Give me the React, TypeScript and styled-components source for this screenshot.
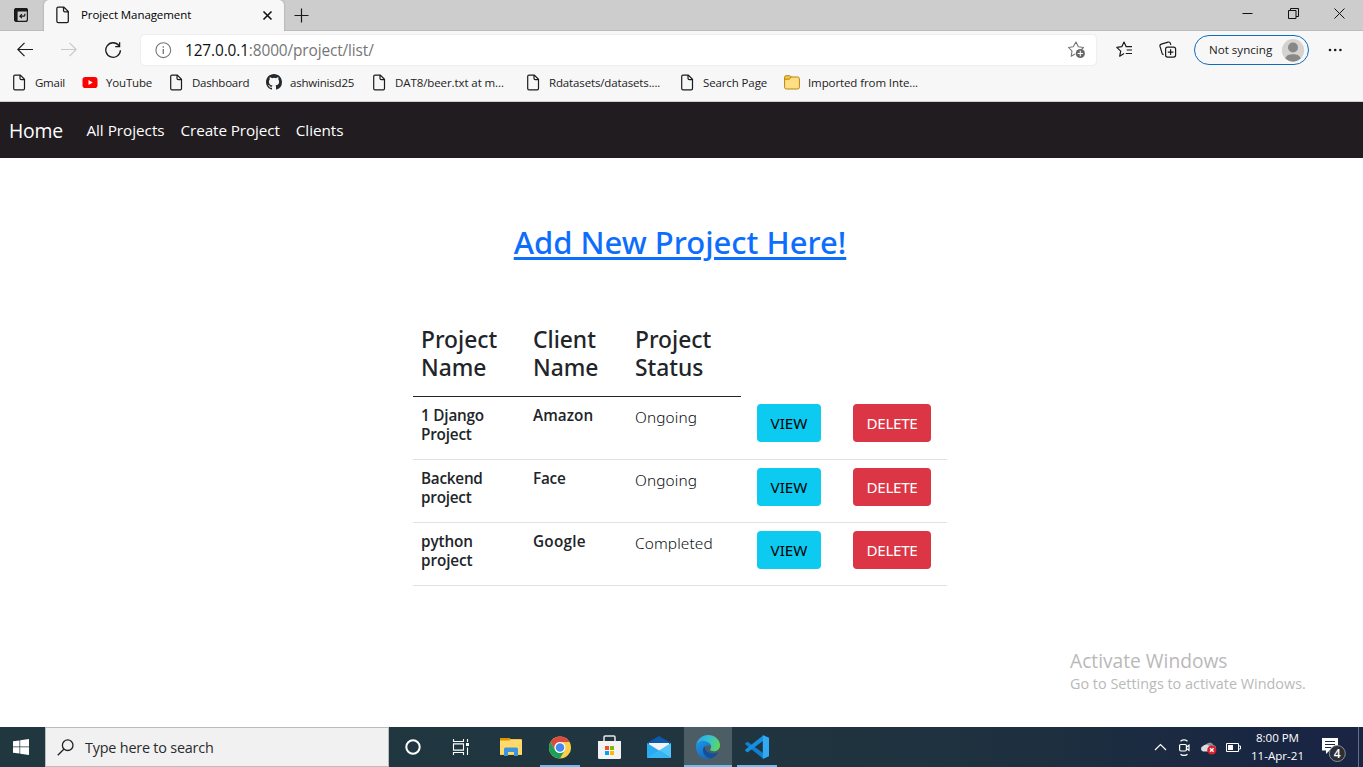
import React from 'react';
import styled, { createGlobalStyle } from 'styled-components';

const GlobalStyle = createGlobalStyle`
  * { box-sizing: border-box; }
  body { margin: 0; background: #fff; font-family: "Open Sans", "Noto Sans", sans-serif; overflow: hidden; }
  h1, h4, h6, p { margin: 0; }
  svg { display: block; flex: none; }
`;

const Screen = styled.div`
  width: 1363px;
  height: 767px;
  display: flex;
  flex-direction: column;
  overflow: hidden;
`;

const Label = styled.span<{ $size: number; $spacing?: number; $weight?: number }>`
  font-size: ${(p) => p.$size}px;
  font-weight: ${(p) => p.$weight ?? 400};
  letter-spacing: ${(p) => p.$spacing ?? 0}px;
  white-space: nowrap;
`;

/* Browser tab strip */
const TabStrip = styled.div`
  height: 31px;
  flex: none;
  display: flex;
  background: #cdcdcd;
  box-shadow: inset 0 -1px #bdbdbd;
`;

const TabActions = styled.div`
  width: 44px;
  height: 30px;
  display: flex;
  align-items: center;
  padding-left: 13px;
`;

const Tab = styled.div`
  width: 240px;
  height: 31px;
  display: flex;
  align-items: center;
  padding: 0 11px 1px 10px;
  background: #f7f7f7;
  border-radius: 5px 5px 0 0;
  box-shadow: 0 0 2px rgba(0, 0, 0, 0.3);
`;

const TabTitle = styled.div`
  flex: 1;
  padding: 0 0 2px 9px;
  line-height: 20px;
`;

const NewTab = styled.div`
  flex: 1;
  height: 30px;
  display: flex;
  align-items: center;
  padding-left: 10px;
`;

const WindowControls = styled.div`
  display: flex;
  height: 27px;
  align-items: center;
`;

const WindowButton = styled.div`
  width: 46px;
  display: flex;
  justify-content: center;
`;

/* Address row */
const Toolbar = styled.div`
  height: 38px;
  flex: none;
  display: flex;
  align-items: center;
  background: #f7f7f7;
`;

const NavButtons = styled.div`
  width: 141px;
  display: flex;
  gap: 28px;
  padding-left: 17px;
`;

const AddressBar = styled.div`
  width: 955px;
  height: 30px;
  display: flex;
  align-items: center;
  padding: 0 10px 0 14px;
  background: #fff;
  border-radius: 4px;
  box-shadow: 0 0 2px rgba(0, 0, 0, 0.12);
`;

const Url = styled.div`
  flex: 1;
  padding-left: 13px;
  color: #767676;
  line-height: 24px;
  b { color: #111; font-weight: 400; }
`;

const ToolbarIcons = styled.div`
  width: 98px;
  display: flex;
  gap: 26px;
  padding-left: 20px;
`;

const Profile = styled.div`
  width: 115px;
  height: 30px;
  display: flex;
  align-items: center;
  justify-content: space-between;
  padding: 0 3px 0 14px;
  border: 1px solid #0f6cbd;
  border-radius: 15px;
  color: #1b1b1b;
  span { padding-bottom: 2px; }
`;

const More = styled.div`
  padding-left: 18px;
`;

const Bookmarks = styled.div`
  height: 33px;
  flex: none;
  display: flex;
  padding: 1px 0 6px 11px;
  background: #f7f7f7;
  border-bottom: 1px solid #cfd0d2;
  color: #222;
`;

const Bookmark = styled.div<{ $width: number }>`
  width: ${(p) => p.$width}px;
  display: flex;
  align-items: center;
  gap: 7px;
`;

/* Site */
const SiteNav = styled.nav`
  height: 56px;
  flex: none;
  display: flex;
  align-items: center;
  padding: 0 0 0 9px;
  background: #211c20;
  color: #fff;
`;

const Brand = styled.div`
  width: 77.4px;
  padding-top: 2px;
  line-height: 30px;
`;

const NavLinks = styled.div`
  display: flex;
  gap: 16px;
  line-height: 24px;
`;

const Page = styled.main`
  flex: 1;
  display: flex;
  flex-direction: column;
  background: #fff;
  color: #212529;
`;

const AddLink = styled.h1`
  width: 534px;
  margin: 65px 0 0 413px;
  text-align: center;
  font-family: "Noto Sans", "Open Sans", sans-serif;
  font-size: 31px;
  line-height: 38px;
  font-weight: 500;
  color: #0d6efd;
  text-decoration: underline;
  text-decoration-thickness: 3px;
  text-underline-offset: 3px;
`;

const Table = styled.div`
  width: 534px;
  margin: 56px 0 0 413px;
`;

const TableHead = styled.div`
  width: 328px;
  height: 80px;
  display: grid;
  grid-template-columns: 112px 102px 114px;
  padding-top: 9px;
  border-bottom: 1px solid #212529;
`;

const HeadCell = styled.h4`
  padding: 0 8px;
  font-family: "Noto Sans", "Open Sans", sans-serif;
  font-size: 22.8px;
  line-height: 28px;
  font-weight: 500;
`;

const TableRow = styled.div`
  height: 63px;
  display: grid;
  grid-template-columns: 112px 102px 114px 96px 110px;
  border-bottom: 1px solid #dee2e6;
`;

const NameCell = styled.h6`
  padding: 9px 8px 0;
  font-size: 15px;
  line-height: 19px;
  font-weight: 600;
`;

const StatusCell = styled.p`
  padding: 9px 8px 0;
  font-family: "Noto Sans", "Open Sans", sans-serif;
  font-size: 15.4px;
  line-height: 24px;
  font-weight: 300;
  letter-spacing: 0.12px;
  color: #0c0f12;
`;

const ActionCell = styled.div<{ $drop: boolean }>`
  padding: ${(p) => (p.$drop ? 8 : 7)}px 16px 0;
`;

const ActionButton = styled.button<{ $kind: 'view' | 'delete' }>`
  width: ${(p) => (p.$kind === 'view' ? 64 : 78)}px;
  height: 38px;
  padding: 0 0 1px;
  border: 0;
  border-radius: 4px;
  background: ${(p) => (p.$kind === 'view' ? '#0dcaf0' : '#dc3545')};
  color: ${(p) => (p.$kind === 'view' ? '#000' : '#fff')};
  font: 400 15.2px "Noto Sans", "Open Sans", sans-serif;
  letter-spacing: ${(p) => (p.$kind === 'view' ? 0.05 : -0.3)}px;
`;

const Watermark = styled.div`
  margin: 61px 0 0 1070px;
  display: flex;
  flex-direction: column;
  color: #b9b9b9;
  line-height: 27px;
  span + span { line-height: 20px; }
`;

/* Taskbar */
const Taskbar = styled.footer`
  height: 40px;
  flex: none;
  display: flex;
  background: linear-gradient(90deg, #203740 0%, #20353f 55%, #1e303f 75%, #192642 93%, #192543 100%);
  color: #fff;
`;

const Start = styled.div`
  width: 45px;
  display: flex;
  align-items: center;
  padding-left: 13px;
`;

const Search = styled.div`
  width: 344px;
  display: flex;
  align-items: center;
  gap: 11px;
  padding-left: 11px;
  background: #f1f1f1;
  border: 1px solid #bcbcbc;
  color: #2b2b2b;
`;

const Apps = styled.div`
  flex: 1;
  display: flex;
`;

const TaskbarApp = styled.div<{ $active?: boolean; $open?: boolean }>`
  width: 48px;
  margin-right: 1.17px;
  display: flex;
  align-items: center;
  justify-content: center;
  background: ${(p) => {
    if (p.$active) return '#4d5d66';
    return p.$open ? 'linear-gradient(#76b9ed, #76b9ed) center bottom / 40px 2px no-repeat' : 'transparent';
  }};
  box-shadow: ${(p) => (p.$active ? 'inset 0 -2px #76b9ed' : 'none')};
`;

const Tray = styled.div`
  display: flex;
  align-items: center;
`;

const TrayIcons = styled.div`
  display: flex;
  align-items: center;
  gap: 9px;
`;

const Clock = styled.div`
  width: 73px;
  display: flex;
  flex-direction: column;
  align-items: center;
  line-height: 18px;
  padding-bottom: 1px;
`;

const Notifications = styled.div`
  width: 44px;
  padding: 5px 0 0 8px;
`;

const ShowDesktop = styled.div`
  width: 5px;
  height: 40px;
  border-left: 1px solid #67708a;
`;

const FileIcon = ({ size = 17 }: { size?: number }) => (
  <svg width={size} height={size} viewBox="0 0 17 17" fill="none" stroke="#1c1c1c" strokeWidth="1.2">
    <path d="M4.1 1.1h5.2l4.2 4.2v9.2a1.3 1.3 0 0 1-1.3 1.3H4a1.3 1.3 0 0 1-1.3-1.3V2.4a1.3 1.3 0 0 1 1.4-1.3zM9 1.2v3.1a1.3 1.3 0 0 0 1.3 1.3h3.1" />
  </svg>
);

const YoutubeIcon = () => (
  <svg width="17" height="17" viewBox="0 0 17 17">
    <rect x="0.5" y="3" width="15" height="11" rx="2.8" fill="#f00" />
    <path d="M6.500 6v5l4.200-2.500z" fill="#fff" />
  </svg>
);

const GithubIcon = () => (
  <svg width="17" height="17" viewBox="0 0 17 17" fill="#24292e">
    <path d="M8 0C3.58 0 0 3.58 0 8c0 3.54 2.29 6.53 5.47 7.59.4.07.55-.17.55-.38 0-.19-.01-.82-.01-1.49-2.01.37-2.53-.49-2.69-.94-.09-.23-.48-.94-.82-1.13-.28-.15-.68-.52-.01-.53.63-.01 1.08.58 1.23.82.72 1.21 1.87.87 2.33.66.07-.52.28-.87.51-1.07-1.78-.2-3.64-.89-3.64-3.95 0-.87.31-1.59.82-2.15-.08-.2-.36-1.02.08-2.12 0 0 .67-.21 2.2.82a7.4 7.4 0 0 1 4 0c1.53-1.04 2.2-.82 2.2-.82.44 1.1.16 1.92.08 2.12.51.56.82 1.27.82 2.15 0 3.07-1.87 3.75-3.65 3.95.29.25.54.73.54 1.48 0 1.07-.01 1.93-.01 2.2 0 .21.15.46.55.38A8 8 0 0 0 16 8c0-4.42-3.58-8-8-8z" />
  </svg>
);

const FolderIcon = () => (
  <svg width="17" height="17" viewBox="0 0 17 17" stroke="#b8860b" strokeWidth="1">
    <rect x="0.600" y="3" width="14.800" height="12" rx="1.800" fill="#ffdf85" />
    <path d="M.6 5.200V3.300a1.600 1.600 0 0 1 1.600-1.600h3.300a1.400 1.400 0 0 1 1.200.7L7 3 5.800 4.800a1 1 0 0 1-.8.4z" fill="#f5c542" />
  </svg>
);

const bookmarks = [
  { text: 'Gmail', width: 71, spacing: -0.25, icon: <FileIcon /> },
  { text: 'YouTube', width: 86, spacing: -0.17, icon: <YoutubeIcon /> },
  { text: 'Dashboard', width: 98, spacing: -0.23, icon: <FileIcon /> },
  { text: 'ashwinisd25', width: 105, spacing: -0.2, icon: <GithubIcon /> },
  { text: 'DAT8/beer.txt at m...', width: 154, spacing: -0.09, icon: <FileIcon /> },
  { text: 'Rdatasets/datasets....', width: 154, spacing: -0.14, icon: <FileIcon /> },
  { text: 'Search Page', width: 105, spacing: -0.12, icon: <FileIcon /> },
  { text: 'Imported from Inte...', width: 150, spacing: -0.1, icon: <FolderIcon /> },
];

const projects = [
  { name: ['1 Django', 'Project'], spacing: -0.2, client: 'Amazon', clientSpacing: 0.05, status: 'Ongoing' },
  { name: ['Backend', 'project'], spacing: -0.25, client: 'Face', clientSpacing: -0.2, status: 'Ongoing' },
  { name: ['python', 'project'], spacing: -0.1, client: 'Google', clientSpacing: 0.25, status: 'Completed' },
];

const BrowserTabs = () => (
  <TabStrip>
    <TabActions>
      <svg width="16" height="16" viewBox="0 0 16 16" fill="none" stroke="#1a1a1a" strokeWidth="1.2">
        <rect x="1.6" y="1.6" width="12.8" height="12.8" rx="2" />
        <path d="M1.6 4v-.8a1.6 1.6 0 0 1 1.6-1.6h9.6a1.6 1.6 0 0 1 1.6 1.6V4z" fill="#1a1a1a" />
        <path d="M2 4h2v10.2H3a1 1 0 0 1-1-1z" fill="#1a1a1a" />
        <path d="M11.8 6.8v1.4a1 1 0 0 1-1 1H7M8.9 7.2l-2 2 2 2" />
      </svg>
    </TabActions>
    <Tab>
      <FileIcon size={18} />
      <TabTitle>
        <Label $size={11.5} $spacing={-0.08}>Project Management</Label>
      </TabTitle>
      <svg width="11" height="11" viewBox="0 0 11 11" stroke="#111" strokeWidth="1.6">
        <path d="M1.5 1.5l8 8M9.5 1.5l-8 8" />
      </svg>
    </Tab>
    <NewTab>
      <svg width="15" height="15" viewBox="0 0 15 15" stroke="#1a1a1a" strokeWidth="1.2">
        <path d="M7.5 0.5v14M0.5 7.5h14" />
      </svg>
    </NewTab>
    <WindowControls>
      <WindowButton>
        <svg width="12" height="11" viewBox="0 0 12 11" stroke="#111"><path d="M0.5 5.5h10" /></svg>
      </WindowButton>
      <WindowButton>
        <svg width="12" height="11" viewBox="0 0 12 11" fill="none" stroke="#111">
          <path d="M.5 2.5h7.5v8h-7.5zM2.5 2.5v-2h8v8h-2.5" />
        </svg>
      </WindowButton>
      <WindowButton>
        <svg width="12" height="11" viewBox="0 0 12 11" stroke="#111"><path d="M.5.5l10 10M10.5.5l-10 10" /></svg>
      </WindowButton>
    </WindowControls>
  </TabStrip>
);

const AddressRow = () => (
  <Toolbar>
    <NavButtons>
      <svg width="16" height="16" viewBox="0 0 16 16" fill="none" stroke="#1a1a1a" strokeWidth="1.2">
        <path d="M16 7.5H1M7.5.8L.8 7.5l6.7 6.7" />
      </svg>
      <svg width="16" height="16" viewBox="0 0 16 16" fill="none" stroke="#c9c9c9" strokeWidth="1.2">
        <path d="M0 7.5h15M8.5.8l6.7 6.7-6.7 6.7" />
      </svg>
      <svg width="17" height="17" viewBox="0 0 17 17" fill="none" stroke="#1a1a1a" strokeWidth="1.3">
        <path d="M13.9 3.6A7.3 7.3 0 1 0 15.4 8.2M14.6 0.3v4.3h-4.4" />
      </svg>
    </NavButtons>
    <AddressBar>
      <svg width="17" height="17" viewBox="0 0 17 17" fill="none" stroke="#767676" strokeWidth="1.1">
        <circle cx="8.3" cy="8.2" r="7.4" />
        <path d="M8.3 7v5M8.3 4.2v1.5" strokeWidth="1.3" />
      </svg>
      <Url>
        <Label $size={15.4} $spacing={-0.12}><b>127.0.0.1</b>:8000/project/list/</Label>
      </Url>
      <svg width="18" height="18" viewBox="0 0 18 18" fill="none" stroke="#767676" strokeWidth="1.1">
        <path d="M7 13L3.200 15.200l.8-5L.6 6.500l4.600-.8L8 1l2.300 4.700 5.200.8-2 2" strokeLinejoin="round" />
        <circle cx="12.300" cy="12.500" r="4.600" fill="#676767" stroke="none" />
        <path d="M12.300 9.800v5.400M9.600 12.500h5.400" stroke="#fff" />
      </svg>
    </AddressBar>
    <ToolbarIcons>
      <svg width="17" height="17" viewBox="0 0 17 17" fill="none" stroke="#1a1a1a" strokeWidth="1.2" strokeLinejoin="round">
        <path d="M8 12.600L3.700 15.200l1-5.100L.8 6.400l5-.7L8 1.100l2.200 4.600H16M10.700 9H16M9.700 12.500H16" />
      </svg>
      <svg width="18" height="18" viewBox="0 0 18 18" fill="none" stroke="#1a1a1a" strokeWidth="1.2">
        <rect x="6.600" y="6.100" width="10" height="10" rx="2" />
        <path d="M11.600 8.300v5.600M8.800 11.100h5.600M4.600 13.600a2 2 0 0 1-1.500-1.200L1 5.400a1.900 1.900 0 0 1 1.300-2.300l6.800-2a1.900 1.900 0 0 1 2.300 1.300l.4 1.400" />
      </svg>
    </ToolbarIcons>
    <Profile>
      <Label $size={11.6}>Not syncing</Label>
      <svg width="23" height="23" viewBox="0 0 23 23">
        <circle cx="11" cy="11.300" r="11.200" fill="#d5d3d1" />
        <circle cx="11" cy="8.500" r="5" fill="#8a8886" />
        <path d="M3.300 19.600c1-3.500 4-4.300 7.700-4.300s6.700.8 7.700 4.300a11.300 11.300 0 0 1-15.400 0z" fill="#8a8886" />
      </svg>
    </Profile>
    <More>
      <svg width="16" height="4" viewBox="0 0 16 4" fill="#1a1a1a">
        <circle cx="3" cy="2" r="1.300" /><circle cx="8.200" cy="2" r="1.300" /><circle cx="13.400" cy="2" r="1.300" />
      </svg>
    </More>
  </Toolbar>
);

const ProjectTable = () => (
  <Table>
    <TableHead>
      <HeadCell>Project Name</HeadCell>
      <HeadCell>Client Name</HeadCell>
      <HeadCell>Project Status</HeadCell>
    </TableHead>
    {projects.map((p, i) => (
      <TableRow key={p.client}>
        <NameCell><Label $size={15.3} $weight={600} $spacing={p.spacing}>{p.name[0]}<br />{p.name[1]}</Label></NameCell>
        <NameCell><Label $size={15.3} $weight={600} $spacing={p.clientSpacing}>{p.client}</Label></NameCell>
        <StatusCell>{p.status}</StatusCell>
        <ActionCell $drop={i > 0}><ActionButton $kind="view">VIEW</ActionButton></ActionCell>
        <ActionCell $drop={i > 0}><ActionButton $kind="delete">DELETE</ActionButton></ActionCell>
      </TableRow>
    ))}
  </Table>
);

const WindowsTaskbar = () => (
  <Taskbar>
    <Start>
      <svg width="16" height="16" viewBox="0 0 16 16" fill="#fff">
        <path d="M0 2.300L6.500 1.400v6.200H0zM7.200 1.300L16 0v7.600H7.200zM0 8.300h6.500v6.300L0 13.700zM7.200 8.300H16V16l-8.800-1.300z" />
      </svg>
    </Start>
    <Search>
      <svg width="17" height="17" viewBox="0 0 17 17" fill="none" stroke="#222" strokeWidth="1.300">
        <circle cx="10.700" cy="6.200" r="5.300" /><path d="M7 10L.8 16.200" />
      </svg>
      <Label $size={14.4} $spacing={-0.2}>Type here to search</Label>
    </Search>
    <Apps>
      <TaskbarApp>
        <svg width="16" height="16" viewBox="0 0 16 16" fill="none" stroke="#fff" strokeWidth="2"><circle cx="8" cy="8" r="6.700" /></svg>
      </TaskbarApp>
      <TaskbarApp>
        <svg width="20" height="16" viewBox="0 0 20 16" fill="none" stroke="#fff" strokeWidth="1.100">
          <path d="M1.500 0v2.500h10V0M1.500 4.900h10v6.200h-10zM1.500 16v-2.500h10V16M15.500 0v3M15.500 8.500V16" />
          <rect x="14" y="4" width="3" height="3" fill="#fff" stroke="none" />
        </svg>
      </TaskbarApp>
      <TaskbarApp>
        <svg width="22" height="20" viewBox="0 0 22 20">
          <path d="M0 1h9l1.500 1H21a1 1 0 0 1 1 1v15H0z" fill="#f4bf45" />
          <path d="M0 1h9.500v2.500H0z" fill="#d99a00" />
          <path d="M0 3.800h10L11.500 3H22v14.500H0z" fill="#ffd96b" />
          <path d="M4 19v-7a1.500 1.500 0 0 1 1.500-1.500h11A1.500 1.500 0 0 1 18 12v7h-4v-4H8v4z" fill="#3b94dc" />
        </svg>
      </TaskbarApp>
      <TaskbarApp $open>
        <svg width="22" height="23" viewBox="1 0 46 48">
          <circle cx="24" cy="24" r="23" fill="#fbd04a" />
          <path d="M24 12.500h19.900A23 23 0 0 0 4.100 12.500L14 29.700A11.500 11.500 0 0 1 24 12.500z" fill="#dc4a3f" />
          <path d="M4.100 12.500A23 23 0 0 0 24 47l10-17.300a11.500 11.500 0 0 1-20 0z" fill="#1c9f5a" />
          <circle cx="24" cy="24" r="11.500" fill="#fff" />
          <circle cx="24" cy="24" r="9" fill="#4688f1" />
        </svg>
      </TaskbarApp>
      <TaskbarApp>
        <svg width="23" height="24" viewBox="0 0 23 24">
          <path d="M6 7V2.200A1.200 1.200 0 0 1 7.200 1h8.600A1.200 1.200 0 0 1 17 2.200V7" fill="none" stroke="#e8e8e8" strokeWidth="1.500" />
          <path d="M0 6h23v16.500a1.500 1.500 0 0 1-1.500 1.500h-20A1.500 1.500 0 0 1 0 22.500z" fill="#f3f3f3" />
          <path d="M7 11h4v4H7z" fill="#f25022" /><path d="M12 11h4v4h-4z" fill="#7fba00" />
          <path d="M7 16h4v4H7z" fill="#00a4ef" /><path d="M12 16h4v4h-4z" fill="#ffb900" />
        </svg>
      </TaskbarApp>
      <TaskbarApp>
        <svg width="24" height="24" viewBox="0 0 24 24">
          <path d="M0 8L12 1l12 7v4H0z" fill="#0c59ad" />
          <path d="M2 8h20v5l-10 3L2 13z" fill="#f4f4f4" />
          <path d="M0 8l24 15H1a1 1 0 0 1-1-1z" fill="#2aaaf0" />
          <path d="M24 8L12 15.500 24 23z" fill="#52c6f8" />
          <path d="M0 22.500L12 15.500 24 23H1z" fill="#35b6f4" />
        </svg>
      </TaskbarApp>
      <TaskbarApp $active>
        <svg width="24" height="24" viewBox="0 0 24 24">
          <defs>
            <linearGradient id="edgeTop" x1="0" y1="0.400" x2="1" y2="0.600">
              <stop offset="0" stopColor="#2ba8e8" /><stop offset="0.500" stopColor="#35c1d0" /><stop offset="1" stopColor="#5fd956" />
            </linearGradient>
            <linearGradient id="edgeLeft" x1="0" y1="0" x2="0.600" y2="1">
              <stop offset="0" stopColor="#2196e3" /><stop offset="1" stopColor="#0f6cc8" />
            </linearGradient>
          </defs>
          <path d="M0.200 10.500C1 4.500 6 0 12 0c7 0 12 5 12 10 0 4-3 6.300-6.300 6.300-2.500 0-4-1-3.400-2 2-2.600.4-6.500-4-7C6 7 2 8.500.2 10.500z" fill="url(#edgeTop)" />
          <path d="M0 12c0-4 4.500-6.600 8-6.100 4 .4 6.700 3 6.300 6.100-1-2-5-2-6.800 1.200C5.500 17 8.500 22.500 15 23.600A12 12 0 0 1 0 12z" fill="url(#edgeLeft)" />
          <path d="M8.800 11.200C5.500 13.500 7 20 12 22.500c1.500.8 3 1.200 4 .8a12 12 0 0 0 6-5.300c.3-.5 0-.8-.5-.6C15 20 8.500 17 8.800 11.200z" fill="#124f9e" />
        </svg>
      </TaskbarApp>
      <TaskbarApp $open>
        <svg width="24" height="24" viewBox="0 0 24 24">
          <path d="M.4 8.200L1.800 7a1 1 0 0 1 1.200 0L18 18v5.500L.4 9.400a.8.8 0 0 1 0-1.200z" fill="#0f7fd0" />
          <path d="M.4 15.800L1.800 17a1 1 0 0 0 1.200 0L18 6V.5L.4 14.600a.8.8 0 0 0 0 1.200z" fill="#1590df" />
          <path d="M17.800 0L24 2.800v18.400L17.800 24z" fill="#31a9f3" />
        </svg>
      </TaskbarApp>
    </Apps>
    <Tray>
      <TrayIcons>
        <svg width="13" height="8" viewBox="0 0 13 8" fill="none" stroke="#fff" strokeWidth="1.200"><path d="M1 7l5.500-5.500L12 7" /></svg>
        <svg width="15" height="17" viewBox="0 0 15 17" fill="none" stroke="#fff" strokeWidth="1.200">
          <rect x="3.600" y="5.500" width="6.800" height="6.500" rx="1.200" />
          <path d="M10.500 8l2.500-1.800v5.100l-2.500-1.800M4.500 2.300c2-1.500 5-1.500 7 0M4.500 15.200c2 1.400 5 1.400 7 0" />
        </svg>
        <svg width="17" height="15" viewBox="0 0 17 15">
          <path d="M6 5a4 4 0 0 1 7.500 0c2 .5 2.500 2 2.500 3L8 11z" fill="#8c939f" />
          <path d="M3 11.500a2.900 2.900 0 0 1 0-5.500 4 4 0 0 1 7 1.500l1 4z" fill="#d9dce1" />
          <circle cx="11.800" cy="10" r="4.600" fill="#d8232f" />
          <path d="M10 8.200l3.600 3.600M13.600 8.200L10 11.800" stroke="#fff" strokeWidth="1.300" />
        </svg>
        <svg width="15" height="9" viewBox="0 0 15 9" fill="none" stroke="#fff">
          <path d="M.5.5h12v8H.5zM13 3h1.500v3H13" /><path d="M2 2h5v5H2z" fill="#fff" stroke="none" />
        </svg>
      </TrayIcons>
      <Clock>
        <Label $size={11.6} $spacing={-0.05}>8:00 PM</Label>
        <Label $size={11.6}>11-Apr-21</Label>
      </Clock>
      <Notifications>
        <svg width="26" height="27" viewBox="0 0 26 27">
          <path d="M0 2h16v12.500H7.500L4 18v-3.500H0z" fill="#fff" />
          <path d="M3 5.500h10M3 8.500h10M3 11.500h6" stroke="#1a2744" />
          <circle cx="15.300" cy="17.500" r="8" fill="#2c3036" stroke="#8b8f96" />
          <text x="15.300" y="22" textAnchor="middle" fill="#fff" fontSize="12" fontWeight="600">4</text>
        </svg>
      </Notifications>
      <ShowDesktop />
    </Tray>
  </Taskbar>
);

export default function App() {
  return (
    <Screen>
      <GlobalStyle />
      <BrowserTabs />
      <AddressRow />
      <Bookmarks>
        {bookmarks.map((b) => (
          <Bookmark key={b.text} $width={b.width}>
            {b.icon}
            <Label $size={11.5} $spacing={b.spacing}>{b.text}</Label>
          </Bookmark>
        ))}
      </Bookmarks>
      <SiteNav>
        <Brand><Label $size={19.4} $spacing={-0.2}>Home</Label></Brand>
        <NavLinks>
          <Label $size={15.3} $spacing={-0.03}>All Projects</Label>
          <Label $size={15.3} $spacing={-0.12}>Create Project</Label>
          <Label $size={15.3} $spacing={-0.05}>Clients</Label>
        </NavLinks>
      </SiteNav>
      <Page>
        <AddLink>Add New Project Here!</AddLink>
        <ProjectTable />
        <Watermark>
          <Label $size={19.2}>Activate Windows</Label>
          <Label $size={14.4}>Go to Settings to activate Windows.</Label>
        </Watermark>
      </Page>
      <WindowsTaskbar />
    </Screen>
  );
}
